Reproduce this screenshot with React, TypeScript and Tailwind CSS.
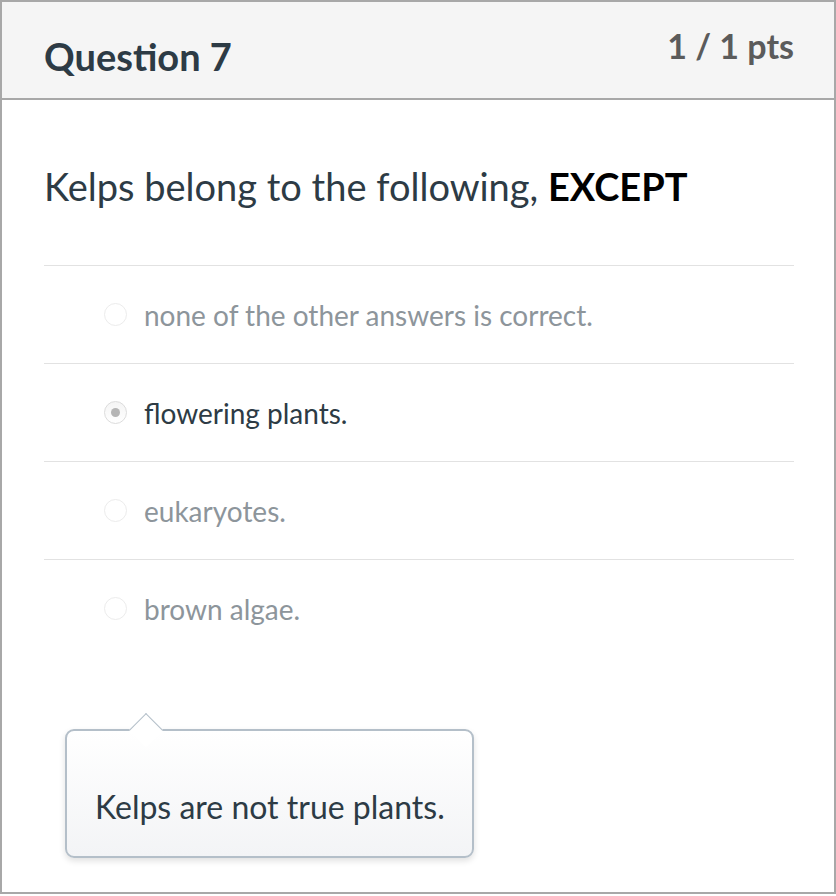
import React from "react";

const answers = [
  { text: "none of the other answers is correct.", selected: false },
  { text: "flowering plants.", selected: true },
  { text: "eukaryotes.", selected: false },
  { text: "brown algae.", selected: false },
];

function Radio({ selected }: { selected: boolean }) {
  return (
    <span
      className={
        "flex h-[23px] w-[23px] shrink-0 items-center justify-center rounded-full border " +
        (selected
          ? "border-[#dcdcdc] bg-gradient-to-b from-[#f4f4f4] to-[#ffffff]"
          : "border-[#ececec] bg-white")
      }
    >
      {selected && <span className="h-[9px] w-[9px] rounded-full bg-[#b5b5b5]" />}
    </span>
  );
}

export default function App() {
  return (
    <div className="bg-white" style={{ fontFamily: "Lato, 'Noto Sans', sans-serif" }}>
      <div className="flex h-[894px] w-[836px] flex-col border-2 border-[#a8a8a8] bg-white">
        <div className="flex h-[98px] items-start justify-between border-b-2 border-[#a8a8a8] bg-[#f5f5f5] pl-[42px] pr-[40px]">
          <div className="mt-[34px] text-[38px] font-bold leading-[40px] text-[#2d3b45]">Question 7</div>
          <div className="mt-[26px] text-[34px] font-bold leading-[36px] text-[#5b5b5b]">1 / 1 pts</div>
        </div>
        <div className="pl-[42px] pr-[40px]">
          <div className="pt-[64px] pb-[57px] text-[38px] leading-[44px] text-[#2d3b45]">
            Kelps belong to the following, <strong className="font-bold text-black">EXCEPT</strong>
          </div>
          <div>
            {answers.map((a, i) => (
              <div
                key={i}
                className="flex h-[98px] items-center gap-[17px] border-t border-[#e2e2e2] pl-[60px]"
              >
                <Radio selected={a.selected} />
                <span
                  className={
                    "text-[28px] " + (a.selected ? "text-[#2d3b45]" : "text-[#8d959b]")
                  }
                >
                  {a.text}
                </span>
              </div>
            ))}
          </div>
          <div className="relative mt-[72px] ml-[21px] w-[409px]">
            <div className="absolute left-[69px] top-[-11px] h-[24px] w-[24px] rotate-45 border-l border-t border-[#b4bfc9] bg-white" />
            <div className="h-[129px] rounded-[9px] border-2 border-[#b4bfc9] bg-gradient-to-b from-white to-[#f3f4f6] pl-[28px] pt-[56px] shadow-[0_3px_6px_rgba(0,0,0,0.12)]">
              <div className="relative text-[32px] leading-[40px] text-[#2d3b45]">Kelps are not true plants.</div>
            </div>
          </div>
        </div>
      </div>
    </div>
  );
}
